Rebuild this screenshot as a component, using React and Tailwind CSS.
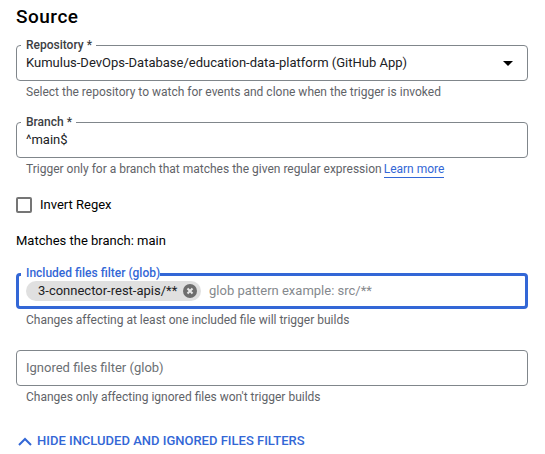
import React from "react";

function Field({ label, focused = false, helper, className = "", children }) {
  return (
    <div className={className}>
      <div
        className={
          focused
            ? "relative flex h-9 items-center rounded-[4px] border-3 border-[#3367d6] pl-[7px]"
            : "relative flex h-9 items-center rounded-[4px] border border-[#80868b] pl-[9px]"
        }
      >
        {label && (
          <span
            className={
              "absolute whitespace-nowrap bg-white text-[12px] font-medium leading-[14px] " +
              (focused ? "-top-[10px] left-[2px] pl-[5px] text-[#3367d6]" : "-top-[8px] left-[4px] pl-[5px] pr-[4px] text-[#3c4043]")
            }
          >
            {label}
          </span>
        )}
        {children}
      </div>
      <div className="flex h-[22px] items-center whitespace-nowrap pl-[10px] text-[12px] text-[#5f6368]">{helper}</div>
    </div>
  );
}

export default function App() {
  return (
    <main className="h-[454px] w-[545px] overflow-hidden bg-white pl-4 pr-[17px] font-[Roboto,sans-serif] text-[13px] text-black">
      <h2 className="h-[45px] pt-[5px] text-[19px] font-medium leading-6 tracking-[0.5px]">Source</h2>

      <Field label="Repository *" helper="Select the repository to watch for events and clone when the trigger is invoked">
        <span className="grow whitespace-nowrap text-[#202124]">
          Kumulus-DevOps-Database/education-data-platform (GitHub App)
        </span>
        <svg className="mr-[14px] h-[5px] w-[10px]" viewBox="0 0 10 5">
          <path d="M0 0h10L5 5z" fill="#000" />
        </svg>
      </Field>

      <Field
        className="mt-[19px]"
        label="Branch *"
        helper={
          <>
            Trigger only for a branch that matches the given regular expression
            <a className="ml-[2px] mt-px border-b border-[#3367d6] leading-[15px] text-[#3367d6]">Learn more</a>
          </>
        }
      >
        <span className="text-[#202124]">^main$</span>
      </Field>

      <label className="mt-[17px] flex h-4 items-center gap-2">
        <span className="size-4 rounded-[2px] border-2 border-[#757575]" />
        <span>Invert Regex</span>
      </label>

      <p className="mt-[18px] h-5 leading-5">Matches the branch: main</p>

      <Field
        className="mt-[22px]"
        focused
        label="Included files filter (glob)"
        helper="Changes affecting at least one included file will trigger builds"
      >
        <span className="flex h-5 w-[175px] items-center justify-between rounded-full bg-[#e0e0e0] pl-3 pr-[4px] text-[#202124]">
          3-connector-rest-apis/**
          <svg className="size-[14px]" viewBox="0 0 14 14">
            <circle cx="7" cy="7" r="7" fill="#6e6e6e" />
            <path d="M4.5 4.5l5 5M9.5 4.5l-5 5" stroke="#e8e8e8" strokeWidth="2" />
          </svg>
        </span>
        <span className="ml-2 text-[#85898d]">glob pattern example: src/**</span>
      </Field>

      <Field className="mt-[19px]" helper="Changes only affecting ignored files won't trigger builds">
        <span className="text-[#6b6f73]">Ignored files filter (glob)</span>
      </Field>

      <button className="mt-[23px] flex h-5 items-center pl-[2px] font-medium text-[#3367d6]">
        <svg className="mr-[5px] h-[9px] w-[14px]" viewBox="0 0 14 9" fill="none">
          <path d="M1 8l6-6 6 6" stroke="#3367d6" strokeWidth="2" />
        </svg>
        HIDE INCLUDED AND IGNORED FILES FILTERS
      </button>
    </main>
  );
}
